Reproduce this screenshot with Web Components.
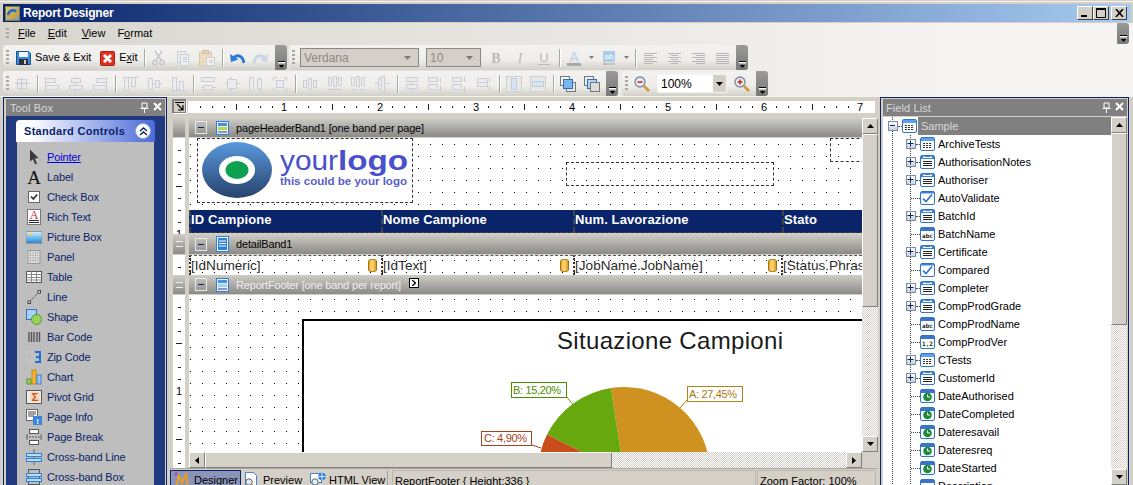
<!DOCTYPE html>
<html><head><meta charset="utf-8"><title>Report Designer</title>
<style>
html,body{margin:0;padding:0;height:485px;overflow:hidden;background:#d4d0c8}
body{font:11px "Liberation Sans",Arial,sans-serif;color:#000}
</style>
<script>
const R=(x,y,w,h,f='#eaecef',s='#cbcfd4')=>`<rect x="${x+.5}" y="${y+.5}" width="${w}" height="${h}" fill="${f}" stroke="${s}"/>`;
const L=(a,b,c,d,s='#c6cacf')=>`<path d="M${a+.5} ${b+.5}L${c+.5} ${d+.5}" stroke="${s}" fill="none"/>`;
const HD=(f='#3a86dc')=>`<rect x=".5" y="1.5" width="14" height="13" rx="1.5" fill="#fff" stroke="#2f74c8"/><rect x="1" y="2" width="13" height="3" fill="${f}"/>`;
const I={
save:`<path d="M.5 1.5h12l2 2v11H.5z" fill="#3c8ae0" stroke="#1d548f"/><rect x="3" y="2" width="9" height="5" fill="#edf4fc"/><rect x="3" y="9" width="9" height="6" fill="#2c3038"/><rect x="8" y="10" width="2" height="4" fill="#ccc"/>`,
exit:`<rect x=".5" y="1.5" width="14" height="14" rx="1" fill="#e2321f" stroke="#a5200f"/><path d="M4 5l7 7M11 5l-7 7" stroke="#fff" stroke-width="3"/>`,
cut:`<path d="M4 1l6 9M11 1L5 10" stroke="#c3c7cb" stroke-width="1.4" fill="none"/><circle cx="4" cy="12.5" r="2.2" fill="none" stroke="#c3c7cb" stroke-width="1.4"/><circle cx="11" cy="12.5" r="2.2" fill="none" stroke="#c3c7cb" stroke-width="1.4"/>`,
copy:R(2,1,8,11)+R(5,4,8,11,'#eef0f2')+L(7,7,11,7)+L(7,9,11,9)+L(7,11,11,11),
paste:R(0,2,12,13,'#ecdcc0','#d8c6a6')+R(3,0,6,3,'#e2d4bc','#d0c0a4')+R(7,7,8,8,'#f2f3f4')+L(9,10,13,10)+L(9,12,13,12),
undo:`<path d="M15 13C14 6 9 4 5 7.5" fill="none" stroke="#2a7ad4" stroke-width="3"/><path d="M1 4l1 8 7.5-2.5z" fill="#2a7ad4"/>`,
redo:`<path d="M1 13C2 6 7 4 11 7.5" fill="none" stroke="#c8d7e6" stroke-width="3"/><path d="M15 4l-1 8-7.5-2.5z" fill="#c8d7e6"/>`,
bold:`<text x="8" y="13" text-anchor="middle" font-family="Liberation Serif" font-weight="700" font-size="14" fill="#bdbab4">B</text>`,
ital:`<text x="8" y="13" text-anchor="middle" font-family="Liberation Serif" font-style="italic" font-size="14" fill="#bdbab4">I</text>`,
under:`<text x="8" y="12" text-anchor="middle" font-family="Liberation Sans" font-size="13" fill="#bdbab4">U</text><rect x="2" y="14" width="12" height="1" fill="#bdbab4"/>`,
color:`<text x="8" y="12" text-anchor="middle" font-family="Liberation Sans" font-size="14" fill="#b9d0e8">A</text><rect x="1" y="13" width="14" height="3" fill="#a8a8a4"/>`,
fill:`<rect x="2" y="1" width="12" height="11" fill="#a8cdee"/><text x="8" y="9" text-anchor="middle" font-family="Liberation Sans" font-size="8" fill="#fff">ab</text><rect x="2" y="13" width="4" height="2" fill="#dca8a0"/><rect x="6" y="13" width="4" height="2" fill="#b8d8a8"/><rect x="10" y="13" width="4" height="2" fill="#c8c0d0"/>`,
al:[3,5,7,9,11,13].map((y,i)=>L(1,y,i%2?10:14,y,'#b4b6b8')).join(''),
ac:[3,5,7,9,11,13].map((y,i)=>L(i%2?4:1,y,i%2?11:14,y,'#b4b6b8')).join(''),
ar:[3,5,7,9,11,13].map((y,i)=>L(i%2?5:1,y,14,y,'#b4b6b8')).join(''),
aj:[3,5,7,9,11,13].map(y=>L(1,y,14,y,'#b4b6b8')).join(''),
grid:R(3,3,9,9)+L(7,0,7,15)+L(0,7,15,7),
l1:L(1,0,1,15)+R(1,2,10,4)+R(1,9,13,4),
l2:L(7,0,7,15)+R(3,2,9,4)+R(1,9,13,4),
l3:L(14,0,14,15)+R(4,2,10,4)+R(1,9,13,4),
t1:L(0,1,15,1)+R(2,1,4,13)+R(9,1,4,9),
t2:L(0,7,15,7)+R(2,2,4,11)+R(9,4,4,7),
t3:L(0,14,15,14)+R(2,1,4,13)+R(9,5,4,9),
s1:R(1,1,13,4)+R(3,9,9,4)+L(0,11,3,11)+L(12,11,15,11),
s2:R(3,3,9,9)+L(7,0,7,3)+L(7,12,7,15)+L(0,7,3,7)+L(12,7,15,7),
s3:R(1,1,4,13)+R(9,3,4,9)+L(11,0,11,3)+L(11,12,11,15),
s4:R(4,4,7,7)+L(1,1,4,1)+L(1,1,1,4)+L(14,1,11,1)+L(14,1,14,4)+L(1,14,4,14)+L(1,14,1,11)+L(14,14,11,14)+L(14,14,14,11),
h1:R(1,4,3,7)+R(6,2,3,11)+R(11,4,3,7),
h2:R(2,1,3,8)+R(7,0,3,10)+R(12,1,3,8)+L(0,13,15,13),
h3:R(1,1,3,8)+R(6,0,3,10)+R(11,1,3,8)+L(1,13,6,13)+L(14,13,9,13),
h4:R(4,2,3,11)+R(7,0,3,15)+L(0,7,3,7)+L(11,7,15,7),
v1:L(7,0,7,15)+R(2,1,11,4)+R(2,8,11,4),
v2:R(0,1,9,4)+R(0,8,9,5)+L(12,1,12,6)+L(12,9,12,14),
v3:R(0,1,9,4)+R(0,8,9,5)+L(12,0,12,5)+L(12,10,12,15),
v4:R(1,2,10,4)+R(1,6,10,4)+L(13,0,13,5)+L(13,9,13,14),
c1:R(0,0,15,15,'#e8e8e6','#cfcfcb')+R(5,2,5,11,'#d8e4ef','#bccddd'),
c2:R(0,0,15,15,'#e8e8e6','#cfcfcb')+R(2,5,11,5,'#d8e4ef','#bccddd'),
front:R(0,0,9,9,'#f8f8f8','#777')+R(6,6,9,9,'#e8e8e8','#777')+R(3,3,9,9,'#7ab8f0','#2f6fb8'),
back:R(0,0,9,9,'#eee','#777')+R(3,3,9,9,'#b0d4f4','#2f6fb8')+R(6,6,9,9,'#ddd','#777'),
zm:`<circle cx="6" cy="6" r="5" fill="#e4ecf6" stroke="#7a8a9c" stroke-width="1.3"/><path d="M3.5 6h5" stroke="#c8301c" stroke-width="1.6"/><path d="M10 10l5 5" stroke="#d09a30" stroke-width="2.6"/>`,
zp:`<circle cx="6" cy="6" r="5" fill="#e4ecf6" stroke="#7a8a9c" stroke-width="1.3"/><path d="M3.5 6h5M6 3.5v5" stroke="#c8301c" stroke-width="1.6"/><path d="M10 10l5 5" stroke="#d09a30" stroke-width="2.6"/>`,
pointer:`<path d="M4 .5l8.5 8.5-3.7.4 2.3 5-2 .8-2.2-5L4 12.5z" fill="#3a3a3a"/>`,
label:`<text x="8" y="15" text-anchor="middle" font-family="Liberation Serif" font-size="19" fill="#111">A</text>`,
check:`<rect x="2.5" y="2.5" width="11" height="11" fill="#fff" stroke="#666"/><path d="M5 7.5l2.4 2.5 3.8-4.5" fill="none" stroke="#333" stroke-width="1.8"/>`,
rich:`<rect x="1.5" y=".5" width="13" height="15" fill="#fff" stroke="#777"/><text x="8" y="10" text-anchor="middle" font-family="Liberation Serif" font-size="12" fill="#c43030">A</text><path d="M3 11.5h10M3 13.5h10" stroke="#222"/>`,
pic:`<defs><linearGradient id="sk" x2="0" y2="1"><stop offset="0" stop-color="#d8eefc"/><stop offset=".6" stop-color="#5cb4ee"/><stop offset="1" stop-color="#2a7ec8"/></linearGradient></defs><rect x="0" y="2.5" width="16" height="12" fill="url(#sk)" stroke="#999"/><circle cx="4.5" cy="5.5" r="1.5" fill="#f4d24a"/>`,
panel:`<rect x="2" y="1.5" width="12" height="13" fill="#d8d8d8" stroke="#999"/><path d="M4 4h8M4 6.5h8M4 9h8M4 11.5h8" stroke="#888" stroke-dasharray="1 1.5"/>`,
table:`<rect x=".5" y="2.5" width="15" height="11" fill="#fff" stroke="#555"/><path d="M.5 5.5h15M.5 8.5h15M.5 11h15M5.5 2.5v11M10.5 2.5v11" stroke="#888"/>`,
line:`<path d="M3.5 13L13 3" stroke="#444" stroke-dasharray="1.2 .8"/><rect x="2" y="12" width="2.5" height="2.5" fill="#fff" stroke="#444"/><rect x="12" y="1.5" width="2.5" height="2.5" fill="#fff" stroke="#444"/>`,
shape:`<rect x=".5" y=".5" width="10" height="10" fill="#a8d0f4" stroke="#2f74c8"/><circle cx="10.5" cy="10.5" r="5" fill="#9ad060" stroke="#5a9820"/>`,
bar:`<path d="M3 3v10M5.5 3v10M8 3v10M11 3v10M13.5 3v10" stroke="#555" stroke-width="1.4"/>`,
zip:`<rect x="1" y="3" width="5" height="11" fill="none" stroke="#c6c6c6" stroke-width="1.6" stroke-dasharray="3 1"/><path d="M9 3h5v5h-4 4v5H9" fill="none" stroke="#2070d8" stroke-width="2"/>`,
chart:`<rect x="1" y="10" width="4" height="5" fill="#9ad060" stroke="#5a9820"/><rect x="6" y="1" width="4" height="14" fill="#f4b83c" stroke="#c88a10"/><rect x="11" y="6" width="4" height="9" fill="#9cc8f0" stroke="#3a80c8"/>`,
pivot:`<rect x=".5" y="1.5" width="15" height="13" fill="#eee" stroke="#555"/><rect x="4" y="3" width="10" height="10" fill="#f2dcc0"/><text x="9" y="12" text-anchor="middle" font-family="Liberation Sans" font-weight="700" font-size="11" fill="#d84c10">Σ</text>`,
info:`<rect x=".5" y=".5" width="11" height="11" fill="#fff" stroke="#666"/><path d="M2 3h8M2 5h8M2 7h6" stroke="#444"/><rect x="7" y="7" width="9" height="9" fill="#3a86dc"/><text x="11.5" y="15" text-anchor="middle" font-family="Liberation Sans" font-weight="700" font-size="8" fill="#fff">!</text>`,
brk:`<rect x="3.5" y=".5" width="9" height="4" fill="#fff" stroke="#555"/><rect x="3.5" y="11.5" width="9" height="4" fill="#fff" stroke="#555"/><path d="M0 8h16" stroke="#666" stroke-dasharray="2 1"/><path d="M1 5v6M15 5v6" stroke="#666"/>`,
cbl:`<path d="M8 0v16" stroke="#666"/><rect x=".5" y="4.5" width="15" height="3" fill="#bcdcf8" stroke="#2f80d8"/><rect x=".5" y="9.5" width="15" height="3" fill="#bcdcf8" stroke="#2f80d8"/>`,
cbb:`<rect x="2.5" y=".5" width="11" height="15" fill="none" stroke="#555"/><rect x=".5" y="4.5" width="15" height="3" fill="#bcdcf8" stroke="#2f80d8"/><rect x=".5" y="9.5" width="15" height="3" fill="#bcdcf8" stroke="#2f80d8"/>`,
ftable:HD('#5aa0ea')+`<path d="M3 7.5h9M3 9.5h9M3 11.5h9" stroke="#333" stroke-dasharray="2 1"/>`,
fref:HD()+`<path d="M3 3.5h9M3 3.5l1.5-1M12 3.5l-1.5-1" stroke="#fff"/><path d="M3 7.5h9M3 9.5h9M3 11.5h9" stroke="#222"/>`,
fcheck:`<rect x=".5" y="1.5" width="14" height="13" rx="1.5" fill="#fff" stroke="#2f74c8"/><rect x="1" y="2" width="13" height="1.5" fill="#3a86dc"/><path d="M3 8.5l3 3 6-7" fill="none" stroke="#2f74c8" stroke-width="1.7"/>`,
fabc:HD('#3a74c8')+`<text x="7.5" y="12" text-anchor="middle" font-family="DejaVu Sans Mono" font-weight="700" font-size="6" fill="#222">abc</text>`,
fnum:HD('#3a74c8')+`<text x="7.5" y="12" text-anchor="middle" font-family="DejaVu Sans Mono" font-weight="700" font-size="6" fill="#222">1,2</text>`,
fclock:HD('#3a74c8')+`<circle cx="7.5" cy="9" r="4.3" fill="#1c8a3c"/><path d="M7.5 6.5V9H10" stroke="#fff" fill="none"/>`,
bandH:`<rect x="1.5" y="1.5" width="12" height="13" fill="#e8eef6" stroke="#2f80d8"/><rect x="3" y="3" width="9" height="3" fill="#4a90e0"/><rect x="3" y="7" width="9" height="3" fill="#b8d848"/><rect x="3" y="11" width="9" height="2" fill="#8a9ab0"/>`,
bandD:`<rect x="1.5" y=".5" width="12" height="15" fill="#f4f8fc" stroke="#2f80d8"/><rect x="3" y="2" width="9" height="12" fill="#2f80d8"/><path d="M4 5h7M4 7.5h7M4 10h7" stroke="#fff"/>`,
bandF:`<rect x="1.5" y="1.5" width="12" height="13" fill="#e8eef6" stroke="#2f80d8"/><rect x="3" y="3" width="9" height="3" fill="#4a90e0"/><rect x="3" y="7" width="9" height="3" fill="#a8d0f4"/><rect x="3" y="11" width="9" height="2" fill="#8a9ab0"/>`,
designer:`<path d="M2 15L5 4l3 7 4-9 2 13" fill="none" stroke="#e8a020" stroke-width="2"/><circle cx="2" cy="2" r="1.6" fill="#c83aa0"/>`,
preview:`<path d="M2.5.5h8l3 3v11h-11z" fill="#fff" stroke="#4a80c8"/><circle cx="6" cy="10" r="3.2" fill="#dcecfa" stroke="#666"/><path d="M8.5 12.5L12 15.5" stroke="#c89028" stroke-width="1.8"/>`,
html:`<rect x=".5" y="1.5" width="11" height="9" fill="#fff" stroke="#4a80c8"/><circle cx="5" cy="10" r="3.2" fill="#dcecfa" stroke="#666"/><circle cx="12" cy="4.5" r="3.8" fill="#2f80d8"/><path d="M8.5 4.5h7M12 1v7" stroke="#fff" stroke-width=".8"/>`
};
const def=(tag,css,html)=>customElements.define(tag,class extends HTMLElement{
  connectedCallback(){ if(this.shadowRoot) return;
    this.attachShadow({mode:'open'}).innerHTML=`<style>${css}</style>`+(typeof html==='function'?html(this):html);}
});
const A=(e,n,d='')=>e.hasAttribute(n)?e.getAttribute(n):d;

def('rd-icon',`:host{display:inline-block;width:16px;height:16px;flex:none}svg{display:block}`,
  e=>`<svg width="16" height="16" viewBox="0 0 16 16" shape-rendering="${/^(grid|l\d|t\d|s\d|h\d|v\d|c\d|front|back|al|ac|ar|aj|copy|paste)$/.test(A(e,'name'))?'crispEdges':'auto'}">${I[A(e,'name')]||''}</svg>`);

def('rd-app',`:host{display:flex;flex-direction:column;width:1133px;height:485px;overflow:hidden;background:#d4d0c8}
 .top{flex:none;height:4px;background:linear-gradient(#d4d0c8 0 1px,#f4f3ef 1px 2px,#d4d0c8 2px)}
 .dock{display:flex;flex-direction:column;flex:none;height:73px;background:linear-gradient(90deg,#d8d5ce,#f5f4f2 85%);}
 .main{display:flex;flex:1;min-height:0;padding-left:3px;border-top:1px solid #f4f3ef}`,
 `<div class="top"></div><slot name="title"></slot><div class="dock"><slot name="dock"></slot></div><div class="main"><slot></slot></div>`);

def('rd-title',`:host{display:flex;align-items:center;height:18px;margin:0 2px 1px 3px;padding-left:2px;flex:none;background:linear-gradient(90deg,#0a246a,#a6caf0);color:#fff;font-weight:700;font-size:12px;letter-spacing:-.2px}
 span{margin-left:3px;flex:1}.b{display:flex;align-items:center;justify-content:center;width:16px;height:14px;box-sizing:border-box;background:#d4d0c8;border:1px solid;border-color:#fff #404040 #404040 #fff}
 .x{margin:0 4px 0 2px}svg{display:block}
 .logo{width:15px;height:15px;background:linear-gradient(135deg,#e8c868,#7898a8);border:1px solid #8a7a40;box-sizing:border-box;display:flex;align-items:center;justify-content:center}`,
 `<div class="logo"><svg width="11" height="11" viewBox="0 0 11 11"><path d="M1 7C2 2 7 1 9 4" stroke="#1c6ab8" stroke-width="2.4" fill="none"/><path d="M10 4C9 9 4 10 2 7" stroke="#e8a020" stroke-width="2.4" fill="none"/></svg></div><span><slot></slot></span>
 <div class="b"><svg width="8" height="8"><rect x="0" y="6" width="6" height="2" fill="#000"/></svg></div>
 <div class="b"><svg width="10" height="10"><path d="M.5 1.5h9v8h-9z" fill="none" stroke="#000"/><rect x="0" y="0" width="10" height="2"/></svg></div>
 <div class="b x"><svg width="9" height="8"><path d="M1 0l7 8M8 0L1 8" stroke="#000" stroke-width="1.6"/></svg></div>`);

def('rd-row',`:host{display:flex;align-items:flex-start;flex:none;padding-left:3px}`,`<slot></slot>`);
def('rd-grip',`:host{display:block;width:3px;height:16px;flex:none;background:repeating-linear-gradient(#a9a7a2 0 2px,transparent 2px 4px)}`,``);
def('rd-chevron',`:host{display:flex;align-items:flex-end;justify-content:center;width:12px;align-self:stretch;flex:none;background:linear-gradient(#9a9a98,#787876);border-radius:1px 3px 3px 1px;padding-bottom:2px;box-sizing:border-box}svg{display:block}`,
 `<svg width="7" height="7"><rect x="0" y="0" width="7" height="1" fill="#000"/><rect x="0" y="1" width="7" height="1" fill="#fff"/><path d="M0 3h7L3.5 7z" fill="#000"/><path d="M0 3h7" stroke="#fff"/></svg>`);
def('rd-menu',`:host{display:flex;align-items:center;height:22px;flex:none;padding-left:6px}
 rd-grip{margin-right:9px;height:12px}rd-chevron{margin-left:auto;margin-right:4px;height:21px}.r{display:flex;align-items:center;padding-bottom:2px}`,
 `<rd-grip></rd-grip><div class="r"><slot></slot></div><rd-chevron></rd-chevron>`);
def('rd-toolbar',`:host{display:flex;align-items:center;box-sizing:border-box;height:25px;flex:none;border-radius:3px;background:linear-gradient(#f3f2f0 0,#efeeeb 60%,#d2cfc8 100%);padding-left:3px}
 rd-grip{margin-right:var(--g,3px)}rd-chevron{margin-left:auto}`,`<rd-grip></rd-grip><slot></slot><rd-chevron></rd-chevron>`);
def('tb-btn',`:host{display:flex;align-items:center;justify-content:center;width:24px;height:25px;flex:none;box-sizing:border-box}`,
 e=>`<rd-icon name="${A(e,'icon')}"></rd-icon>`);
def('tb-text',`:host{display:flex;align-items:center;height:25px;flex:none;padding:0 4px;gap:3px}.l{padding-bottom:2px;letter-spacing:-.05px}`,
 e=>`<rd-icon name="${A(e,'icon')}"></rd-icon><span class="l"><slot></slot></span>`);
def('tb-sep',`:host{display:block;width:6px;height:18px;flex:none;background:linear-gradient(#a9a7a2,#a9a7a2) 3px 0/1px 100% no-repeat,linear-gradient(#fff,#fff) 4px 0/1px 100% no-repeat}`,``);
def('tb-arrow',`:host{display:flex;align-items:center;justify-content:center;width:11px;flex:none}`,`<svg width="5" height="3"><path d="M0 0h5L2.5 3z" fill="#808080"/></svg>`);
def('tb-combo',`:host{display:flex;align-items:center;box-sizing:border-box;height:19px;flex:none;background:#d4d0c8;border:1px solid #888;color:#8a8a86;font-size:12px;padding-left:3px;justify-content:space-between;padding-right:7px}
 :host([white]){background:#fff;border:1px solid #f4f4f2;color:#000;padding-right:0}
 .a{display:flex;align-items:center;justify-content:center;align-self:stretch;width:13px;background:#d4d0c8}
 svg{display:block}`,
 e=>`<span><slot></slot></span>`+(e.hasAttribute('white')?`<span class="a"><svg width="7" height="4"><path d="M0 0h7L3.5 4z"/></svg></span>`:`<svg width="7" height="4"><path d="M0 0h7L3.5 4z" fill="#7c7c7c"/></svg>`));

def('rd-toolbox',`:host{display:flex;flex-direction:column;box-sizing:border-box;width:164px;height:388px;flex:none;border:1px solid #0a246a;border-bottom:0;padding:1px 1px 0 2px;overflow:hidden}
 .h{display:flex;align-items:center;height:17px;flex:none;background:#808080;color:#d8d8d8;font-size:11px;letter-spacing:.1px;padding-left:4px;justify-content:space-between}
 .body{flex:1;background:#21397f;padding:4px 10px 0 10px;display:flex;flex-direction:column}
 .g{display:flex;align-items:center;height:22px;flex:none;border-radius:4px 4px 0 0;background:linear-gradient(90deg,#fff 10%,#4a6bd8);color:#0a1f6a;font-weight:700;font-size:11px;letter-spacing:.3px;padding-left:8px;justify-content:space-between;padding-right:4px}
 .c{width:16px;height:16px;border-radius:50%;background:#fff;border:1px solid #9ab;box-sizing:border-box;display:flex;align-items:center;justify-content:center}
 .l{flex:1;background:#bebebe;margin:0 1px;padding-top:5px;display:flex;flex-direction:column}
 .p{display:flex;gap:4px;padding-right:3px}svg{display:block}`,
 `<div class="h"><span>Tool Box</span><span class="p"><svg width="9" height="11"><path d="M2 1h5v5H2zM0.5 6.5h8M4.500 6v5" fill="none" stroke="#fff"/></svg><svg width="9" height="9"><path d="M1 1l7 7M8 1L1 8" stroke="#fff" stroke-width="2"/></svg></span></div>
 <div class="body"><div class="g"><span>Standard Controls</span><span class="c"><svg width="9" height="9"><path d="M1 4l3.500-3L8 4M1 8l3.500-3L8 8" fill="none" stroke="#0a246a" stroke-width="1.4"/></svg></span></div><div class="l"><slot></slot></div></div>`);
def('tool-item',`:host{display:flex;align-items:center;height:20px;flex:none;padding-left:9px;color:#0a1f6a}
 :host([link]) span{color:#0000e0;text-decoration:underline}span{margin-left:5px;letter-spacing:-.15px}`,
 e=>`<rd-icon name="${A(e,'icon')}"></rd-icon><span><slot></slot></span>`);

const TICK=`<span class="d"></span>`;
def('top-ruler',`:host{display:flex;align-items:center;height:12px;background:#fff;padding-left:6px;overflow:hidden;font-size:11px}
 .c{width:12px;flex:none;display:flex;align-items:center;justify-content:center;height:12px}.d{width:1px;height:2px;background:#222}.l{width:1px;height:6px;background:#222}`,
 ()=>{let s='';for(let i=1;i<=56;i++){s+=`<div class="c">${i%8==0?`<span>${i/8}</span>`:i%4==0?'<span class="l"></span>':TICK}</div>`}return s;});
def('side-ruler',`:host{display:block;background:#fff;overflow:hidden;padding-top:6px;box-sizing:border-box;font-size:11px}
 .c{height:12px;display:flex;align-items:center;justify-content:center}.d{width:3px;height:1px;background:#222}.l{width:6px;height:1px;background:#222}`,
 ()=>{let s='';for(let i=1;i<=15;i++){s+=`<div class="c">${i%8==0?`<span>${i/8}</span>`:i%4==0?'<span class="l"></span>':TICK}</div>`}return s;});
def('band-stub',`:host{display:flex;align-items:center;justify-content:center;box-sizing:border-box;height:20px;background:linear-gradient(#d0cdc6,#8a8a88);border-bottom:1px solid #d4d0c8}
 i{display:block;width:7px;height:4px;border:solid #eee;border-width:1px 0}`,e=>e.hasAttribute('handle')?'<i></i>':'');
def('rd-band',`:host{display:flex;align-items:center;box-sizing:border-box;height:20px;flex:none;background:linear-gradient(#d0cdc6,#8a8a88);border-bottom:1px solid #d4d0c8;padding-left:6px;color:#000;letter-spacing:-.17px}
 :host([light]){color:#eee}
 .m{width:10px;height:11px;border:1px solid #e8e8e4;display:flex;align-items:center;justify-content:center;margin-right:8px}.m i{display:block;width:6px;height:1px;background:#0a246a}
 rd-icon{margin-right:5px}
 .n{display:none;width:8px;height:8px;background:#fff;border:1px solid #000;margin:0 0 3px 8px;align-items:center;justify-content:center}.n svg{display:block}
 :host([light]) .n{display:flex}`,
 e=>`<span class="m"><i></i></span><rd-icon name="${A(e,'icon')}"></rd-icon><slot></slot><span class="n"><svg width="4" height="6"><path d="M0 0l3.500 3L0 6" fill="none" stroke="#000" stroke-width="1.300"/></svg></span>`);
const DOTS=`background:conic-gradient(at 1px 1px,transparent 75%,#000 0) var(--px,1px) var(--py,6px)/12px 12px #fff;`;
def('rd-canvas',`:host{display:block;position:relative;${DOTS}overflow:hidden;flex:none}`,`<slot></slot>`);
def('rd-box',`:host{display:block;position:absolute;box-sizing:border-box;border:1px dashed #333}`,`<slot></slot>`);
def('rd-logo',`:host{display:block;position:absolute;left:8px;top:0;width:216px;height:65px;box-sizing:border-box;border:1px dashed #333;background:#fff;overflow:hidden}
 svg{display:block}`,`<svg width="214" height="63" viewBox="198 139 214 63"><defs><linearGradient id="lg" x2="0" y2="1"><stop offset="0" stop-color="#5a98de"/><stop offset="1" stop-color="#27436b"/></linearGradient></defs>
 <ellipse cx="237" cy="170" rx="35" ry="28" fill="url(#lg)"/><ellipse cx="237" cy="170" rx="18" ry="14" fill="#fff"/><ellipse cx="237" cy="170" rx="11.500" ry="9" fill="#0ca050"/>
 <text x="280" y="170" font-family="Liberation Sans" font-size="28" fill="#4a50cc" textLength="58" lengthAdjust="spacingAndGlyphs">your</text>
 <text x="338" y="170" font-family="Liberation Sans" font-weight="700" font-size="28" fill="#4a50cc" textLength="70" lengthAdjust="spacingAndGlyphs">logo</text>
 <text x="280" y="185" font-family="Liberation Sans" font-weight="700" font-size="10.500" fill="#5a60c8" textLength="127" lengthAdjust="spacingAndGlyphs">this could be your logo</text></svg>`);
def('rd-thead',`:host{display:grid;grid-template-columns:192px 192px 209px 80px;height:23px;flex:none;background:#0a246a;color:#fff;font:700 13px "Liberation Sans",Arial,sans-serif;letter-spacing:.1px;margin-bottom:1px}
 ::slotted(span){border-left:2px dashed #444;border-bottom:1px dashed #444;padding:0 0 4px 0;white-space:nowrap;overflow:hidden;display:flex;align-items:center}`,`<slot></slot>`);
def('rd-tcell',`:host{display:flex;align-items:center;justify-content:space-between;box-sizing:border-box;height:20px;border-left:2px dotted #333;border-top:1px dashed #555;font-size:13.6px;color:#2a2a2a;padding:0 4px 0 0;overflow:hidden;white-space:nowrap}
 svg{display:block;flex:none}:host([noicon]) svg{display:none}`,
 `<span><slot></slot></span><svg width="9" height="13"><defs><linearGradient id="cy" x2="1" y2="0"><stop offset="0" stop-color="#f4a818"/><stop offset=".5" stop-color="#ffd878"/><stop offset="1" stop-color="#e09000"/></linearGradient></defs><path d="M.5 2C.5 0 8.500 0 8.500 2V11C8.500 13 .5 13 .5 11z" fill="url(#cy)" stroke="#9a7020"/></svg>`);
def('rd-detail',`:host{display:grid;grid-template-columns:192px 192px 208px 81px;height:20px;${DOTS}--py:5px;flex:none}`,`<slot></slot>`);
def('rd-chart',`:host{display:block;position:absolute;left:113px;top:24px;width:560px;height:133px}svg{display:block}text{font-family:"Liberation Sans",Arial,sans-serif}`,
 `<svg width="560" height="133" viewBox="302 319 560 133"><rect x="302" y="319" width="560" height="133" fill="#fff"/><rect x="302" y="319" width="560" height="2"/><rect x="302" y="319" width="2" height="133"/>
 <text x="557" y="349" font-size="24" fill="#1a1a1a" textLength="226">Situazione Campioni</text>
 <path d="M624 473L610.900 388A86 86 0 0 1 710 473Z" fill="#cf9220"/><path d="M624 473L547 434.600A86 86 0 0 1 610.900 388Z" fill="#66a80d"/><path d="M624 473L539 459.700A86 86 0 0 1 547 434.600Z" fill="#c94d1c"/>
 <path d="M680 408L687 400" stroke="#b0831c"/><path d="M567 397L573 405" stroke="#6a9a20"/><path d="M532 445L541 448" stroke="#a4421b"/>
 <g font-size="11"><rect x="687.500" y="386.500" width="55" height="15" fill="#fff" stroke="#b0831c"/><text x="689" y="397.500" fill="#a87a14" textLength="48">A: 27,45%</text>
 <rect x="511.500" y="382.500" width="55" height="15" fill="#fff" stroke="#4e8c00"/><text x="513" y="393.500" fill="#4e8c00" textLength="48">B: 15,20%</text>
 <rect x="481.500" y="431.500" width="50" height="14" fill="#fff" stroke="#a4421b"/><text x="484" y="442" fill="#a4421b" textLength="43">C: 4,90%</text></g></svg>`);

const TR={u:'M0 5h7L3.5 1z',d:'M0 1h7L3.5 5z',l:'M5 0v7L1 3.500z',r:'M1 0v7L5 3.500z'};
def('sb-btn',`:host{display:flex;align-items:center;justify-content:center;box-sizing:border-box;width:16px;height:16px;flex:none;background:#d4d0c8;border:1px solid;border-color:#fff #808080 #808080 #fff}svg{display:block}`,
 e=>`<svg width="7" height="7"><path d="${TR[A(e,'d')]}"/></svg>`);
const HATCH=`conic-gradient(#fff 25%,#d4d0c8 0 50%,#fff 0 75%,#d4d0c8 0) 0 0/2px 2px`;
def('sb-v',`:host{display:flex;flex-direction:column;width:16px;height:100%;flex:none;background:${HATCH}}
 .t{height:var(--t);background:#d4d0c8;flex:none;box-sizing:border-box;border:1px solid;border-color:#fff #808080 #808080 #fff}.s{flex:1}`,
 `<sb-btn d="u"></sb-btn><div class="t"></div><div class="s"></div><sb-btn d="d"></sb-btn>`);
def('sb-h',`:host{display:flex;height:16px;flex:none;background:${HATCH}}
 .t{width:var(--t);background:#d4d0c8;flex:none;box-sizing:border-box;border:1px solid;border-color:#fff #808080 #808080 #fff}.s{flex:1}`,
 `<sb-btn d="l"></sb-btn><div class="t"></div><div class="s"></div><sb-btn d="r"></sb-btn>`);

def('rd-designer',`:host{display:flex;flex-direction:column;width:708px;height:388px;margin:0 2px 0 3px;flex:none;overflow:hidden}
 .rt{display:flex;flex:none;height:21px;padding:4px 3px 0 18px;box-sizing:border-box;position:relative}
 .cn{position:absolute;left:2px;top:2px;width:15px;height:15px;box-sizing:border-box;background:#d4d0c8;border:1px solid;border-color:#808080 #fff #fff #808080;outline:1px solid #808080;outline-offset:-2px;display:flex;align-items:center;justify-content:center}
 .cn svg{display:block}
 top-ruler{flex:1}
 .b{display:grid;grid-template-columns:12px 4px 673px 16px;grid-template-rows:334px 16px;padding-left:3px;flex:none}
 .lr{grid-row:1/3;grid-column:1;display:flex;flex-direction:column}
 .m{grid-column:3;grid-row:1;display:flex;flex-direction:column;overflow:hidden}
 .v{grid-column:4;grid-row:1;--t:173px}.hs{grid-column:3;grid-row:2;--t:407px}
 .st{flex:1}`,
 `<div class="rt"><div class="cn"><svg width="9" height="9"><path d="M0 .5h9M2 2l6 6M8 3v5H3" fill="none" stroke="#000" stroke-width="1.200"/></svg></div><top-ruler></top-ruler></div>
 <div class="b"><div class="lr"><band-stub></band-stub><side-ruler style="height:96px"></side-ruler><band-stub handle style="height:21px"></band-stub><side-ruler style="height:20px"></side-ruler><band-stub handle></band-stub><side-ruler style="height:173px"></side-ruler></div>
 <div class="m"><slot></slot></div><sb-v class="v"></sb-v><sb-h class="hs"></sb-h></div><div class="st"><slot name="status"></slot></div>`);

def('rd-status',`:host{display:flex;align-items:flex-start;height:19px;padding-top:1px;border-top:1px solid #a8a59e;overflow:hidden;white-space:nowrap}
 .tab{display:flex;align-items:center;height:20px;flex:none;box-sizing:border-box}
 .a{width:71px;background:#8b95b8;border:1px solid #0a246a;padding-left:3px;gap:4px}
 .p{margin-left:1px;width:66px;padding-left:1px;gap:4px}.h{width:79px;padding-left:2px;gap:3px}
 .sep{width:1px;height:18px;background:#a8a59e;margin:0 4px 0 0;flex:none}
 .pn{height:20px;box-sizing:border-box;border:1px solid #bcb8b0;border-bottom:0;padding-left:2px;flex:none;display:flex;align-items:center}`,
 `<div class="tab a"><rd-icon name="designer"></rd-icon>Designer</div><div class="tab p"><rd-icon name="preview"></rd-icon>Preview</div><div class="tab h"><rd-icon name="html"></rd-icon>HTML View</div><div class="sep"></div>
 <div class="pn" style="width:364px">ReportFooter { Height:336 }</div><div class="pn" style="width:119px;margin-left:1px">Zoom Factor: 100%</div>`);

def('field-list',`:host{display:flex;flex-direction:column;box-sizing:border-box;width:249px;height:388px;flex:none;border:1px solid #0a246a;border-bottom:0;padding:1px 1px 0 2px;overflow:hidden}
 .h{display:flex;align-items:center;height:17px;flex:none;background:#808080;color:#d8d8d8;font-size:11px;letter-spacing:.1px;padding-left:3px;justify-content:space-between}
 .p{display:flex;gap:4px;padding-right:3px}svg{display:block}
 .b{flex:1;display:flex;min-height:0;margin-top:1px;--t:192px}
 .tree{flex:1;background:repeating-linear-gradient(#444 0 1px,transparent 1px 2px) 9px 0/1px 100% no-repeat,repeating-linear-gradient(#444 0 1px,transparent 1px 2px) 27px 18px/1px 100% no-repeat,#fff;overflow:hidden}`,
 `<div class="h"><span>Field List</span><span class="p"><svg width="9" height="11"><path d="M2 1h5v5H2zM0.500 6.500h8M4.500 6v5" fill="none" stroke="#fff"/></svg><svg width="9" height="9"><path d="M1 1l7 7M8 1L1 8" stroke="#fff" stroke-width="2"/></svg></span></div>
 <div class="b"><div class="tree"><slot></slot></div><sb-v></sb-v></div>`);
const BOX=s=>`<span class="x"><svg width="8" height="8"><path d="${s}" stroke="#14284c" stroke-width="1" fill="none"/></svg></span>`;
def('tree-row',`:host{display:flex;align-items:center;height:18px;padding-left:23px;white-space:nowrap}
 :host([root]){padding-left:5px}
 .x{width:10px;height:10px;box-sizing:border-box;border:1px solid #7c8ba4;background:linear-gradient(#fff,#c6d0e0);display:flex;align-items:center;justify-content:center;flex:none}.x svg{display:block}
 .c{width:4px;border-top:1px dotted #444;flex:none}
 .lf{width:9px;margin-left:5px;border-top:1px dotted #444;flex:none}
 span.t{margin-left:2px}
 :host([root]) span.t{background:#808080;color:#d8d8d8;flex:1;align-self:stretch;display:flex;align-items:center;margin-left:0;padding-left:3px}`,
 e=>(e.hasAttribute('leaf')?`<span class="lf"></span>`:BOX(e.hasAttribute('root')?'M1 3.500h5':'M.5 3.500h6M3.500 .5v6')+`<span class="c"></span>`)+`<rd-icon name="${A(e,'icon')}"></rd-icon><span class="t"><slot></slot></span>`);
</script></head>
<body>
<rd-app>
<rd-title slot="title">Report Designer</rd-title>
<rd-menu slot="dock"><span style="margin-right:12px"><u>F</u>ile</span><span style="margin-right:15px"><u>E</u>dit</span><span style="margin-right:12px"><u>V</u>iew</span><span>F<u>o</u>rmat</span></rd-menu>
<rd-row slot="dock" style="gap:2px;margin-bottom:1px">
 <rd-toolbar style="width:284px">
  <tb-text icon="save">Save &amp; Exit</tb-text><tb-text icon="exit" style="margin-left:1px">E<u>x</u>it</tb-text><tb-sep></tb-sep>
  <tb-btn icon="cut"></tb-btn><tb-btn icon="copy"></tb-btn><tb-btn icon="paste"></tb-btn><tb-sep></tb-sep><tb-btn icon="undo"></tb-btn><tb-btn icon="redo"></tb-btn>
 </rd-toolbar>
 <rd-toolbar style="width:459px">
  <tb-combo style="width:119px;margin-left:2px">Verdana</tb-combo><tb-combo style="width:55px;margin:0 3px 0 7px">10</tb-combo>
  <tb-btn icon="bold"></tb-btn><tb-btn icon="ital"></tb-btn><tb-btn icon="under"></tb-btn><tb-sep></tb-sep><tb-btn icon="color"></tb-btn><tb-arrow></tb-arrow><tb-btn icon="fill"></tb-btn><tb-arrow></tb-arrow><tb-sep></tb-sep>
  <tb-btn icon="al"></tb-btn><tb-btn icon="ac"></tb-btn><tb-btn icon="ar"></tb-btn><tb-btn icon="aj"></tb-btn>
 </rd-toolbar>
</rd-row>
<rd-row slot="dock" style="gap:4px">
 <rd-toolbar style="width:615px;--g:1px">
  <tb-btn icon="grid"></tb-btn><tb-sep></tb-sep><tb-btn icon="l1"></tb-btn><tb-btn icon="l2"></tb-btn><tb-btn icon="l3"></tb-btn><tb-sep></tb-sep>
  <tb-btn icon="t1"></tb-btn><tb-btn icon="t2"></tb-btn><tb-btn icon="t3"></tb-btn><tb-sep></tb-sep>
  <tb-btn icon="s1"></tb-btn><tb-btn icon="s2"></tb-btn><tb-btn icon="s3"></tb-btn><tb-btn icon="s4"></tb-btn><tb-sep></tb-sep>
  <tb-btn icon="h1"></tb-btn><tb-btn icon="h2"></tb-btn><tb-btn icon="h3"></tb-btn><tb-btn icon="h4"></tb-btn><tb-sep></tb-sep>
  <tb-btn icon="v1"></tb-btn><tb-btn icon="v2"></tb-btn><tb-btn icon="v3"></tb-btn><tb-btn icon="v4"></tb-btn><tb-sep></tb-sep>
  <tb-btn icon="c1"></tb-btn><tb-btn icon="c2"></tb-btn><tb-sep></tb-sep><tb-btn icon="front"></tb-btn><tb-btn icon="back"></tb-btn>
 </rd-toolbar>
 <rd-toolbar style="width:146px;--g:2px">
  <tb-btn icon="zm"></tb-btn><tb-combo white style="width:70px;margin:0 3px">100%</tb-combo><tb-btn icon="zp"></tb-btn>
 </rd-toolbar>
</rd-row>
<rd-toolbox>
 <tool-item icon="pointer" link>Pointer</tool-item><tool-item icon="label">Label</tool-item><tool-item icon="check">Check Box</tool-item><tool-item icon="rich">Rich Text</tool-item><tool-item icon="pic">Picture Box</tool-item><tool-item icon="panel">Panel</tool-item><tool-item icon="table">Table</tool-item><tool-item icon="line">Line</tool-item><tool-item icon="shape">Shape</tool-item><tool-item icon="bar">Bar Code</tool-item><tool-item icon="zip">Zip Code</tool-item><tool-item icon="chart">Chart</tool-item><tool-item icon="pivot">Pivot Grid</tool-item><tool-item icon="info">Page Info</tool-item><tool-item icon="brk">Page Break</tool-item><tool-item icon="cbl">Cross-band Line</tool-item><tool-item icon="cbb">Cross-band Box</tool-item>
</rd-toolbox>
<rd-designer>
 <rd-band icon="bandH">pageHeaderBand1 [one band per page]</rd-band>
 <rd-canvas style="height:72px">
  <rd-logo></rd-logo>
  <rd-box style="left:377px;top:24px;width:208px;height:24px"></rd-box>
  <rd-box style="left:641px;top:0;width:40px;height:24px"></rd-box>
 </rd-canvas>
 <rd-thead><span>ID Campione</span><span>Nome Campione</span><span>Num. Lavorazione</span><span>Stato</span></rd-thead>
 <rd-band icon="bandD" style="height:21px">detailBand1</rd-band>
 <rd-detail><rd-tcell>[IdNumeric]</rd-tcell><rd-tcell>[IdText]</rd-tcell><rd-tcell>[JobName.JobName]</rd-tcell><rd-tcell noicon>[Status.Phras</rd-tcell></rd-detail>
 <rd-band icon="bandF" light>ReportFooter [one band per report]</rd-band>
 <rd-canvas style="height:157px;--py:4px"><rd-chart></rd-chart></rd-canvas>
 <rd-status slot="status"></rd-status>
</rd-designer>
<field-list>
 <tree-row root icon="ftable">Sample</tree-row>
 <tree-row icon="ftable">ArchiveTests</tree-row><tree-row icon="fref">AuthorisationNotes</tree-row><tree-row icon="fref">Authoriser</tree-row><tree-row leaf icon="fcheck">AutoValidate</tree-row><tree-row icon="fref">BatchId</tree-row><tree-row leaf icon="fabc">BatchName</tree-row><tree-row icon="fref">Certificate</tree-row><tree-row leaf icon="fcheck">Compared</tree-row><tree-row icon="fref">Completer</tree-row><tree-row icon="fref">CompProdGrade</tree-row><tree-row leaf icon="fabc">CompProdName</tree-row><tree-row leaf icon="fnum">CompProdVer</tree-row><tree-row icon="ftable">CTests</tree-row><tree-row icon="fref">CustomerId</tree-row><tree-row leaf icon="fclock">DateAuthorised</tree-row><tree-row leaf icon="fclock">DateCompleted</tree-row><tree-row leaf icon="fclock">Dateresavail</tree-row><tree-row leaf icon="fclock">Dateresreq</tree-row><tree-row leaf icon="fclock">DateStarted</tree-row><tree-row leaf icon="fabc">Description</tree-row>
</field-list>
</rd-app>
</body></html>
